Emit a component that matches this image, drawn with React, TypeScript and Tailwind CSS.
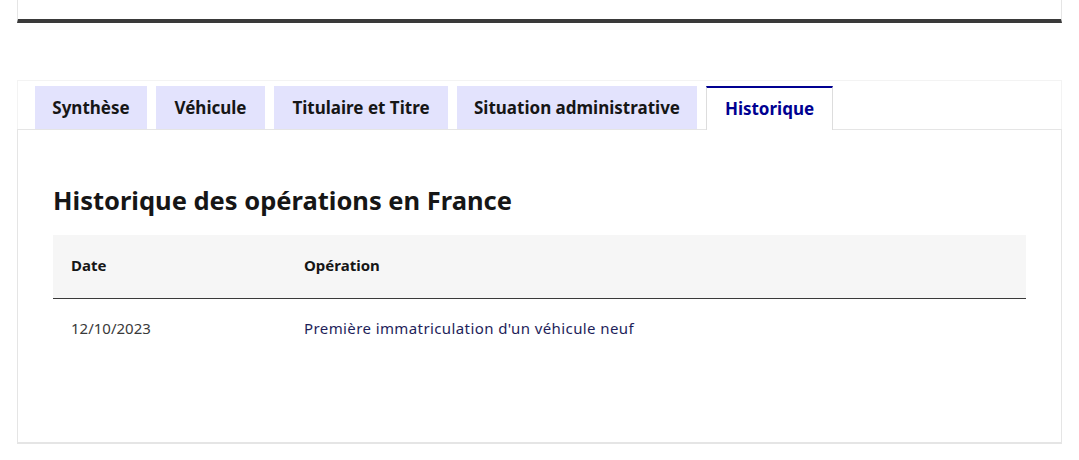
const tabs = [
  { name: "Synthèse", width: "w-[112px]" },
  { name: "Véhicule", width: "w-[109px]" },
  { name: "Titulaire et Titre", width: "w-[174px]" },
  { name: "Situation administrative", width: "w-[240px]" },
];

export default function App() {
  return (
    <div className="h-[460px] w-[1079px] bg-white font-['Noto_Sans',sans-serif] text-[#161616]">
      <div className="mx-[17px] w-[1045px]">
        {/* top card */}
        <div className="h-[23px] border-x border-[#e5e5e5] border-b-4 border-b-[#3a3a3a]" />

        {/* tabs */}
        <div className="mt-[57px] flex h-[49px] items-end gap-[9px] border-x border-t border-[#f3f3f3] pl-[17px]">
          {tabs.map((tab) => (
            <div
              key={tab.name}
              className={`${tab.width} flex h-[43px] items-center justify-center bg-[#e3e3fd] text-[17px] font-bold`}
            >
              {tab.name}
            </div>
          ))}
          <div className="-mb-px flex h-[44px] w-[127px] items-center justify-center border-x border-t-2 border-[#dddddd] border-t-[#000091] bg-white text-[17px] font-bold text-[#000091]">
            Historique
          </div>
        </div>

        {/* panel */}
        <div className="h-[315px] border border-b-2 border-[#e5e5e5] px-[35px] pt-[54px]">
          <h2 className="text-[25.5px] font-bold leading-[32px]">
            Historique des opérations en France
          </h2>
          <table className="mt-[19px] w-full border-collapse text-left">
            <thead>
              <tr className="h-[63px] border-b border-[#3a3a3a] bg-[#f6f6f6] text-[15px] font-bold">
                <th className="w-[233px] pb-[3px] pl-[18px] font-bold">Date</th>
                <th className="pb-[3px] pl-[18px] font-bold">Opération</th>
              </tr>
            </thead>
            <tbody>
              <tr className="h-[60px] text-[15px]">
                <td className="pl-[18px] text-[#3a3a3a]">12/10/2023</td>
                <td className="pl-[18px] tracking-[0.4px] text-[#1e1e5a]">
                  Première immatriculation d'un véhicule neuf
                </td>
              </tr>
            </tbody>
          </table>
        </div>
      </div>
    </div>
  );
}
